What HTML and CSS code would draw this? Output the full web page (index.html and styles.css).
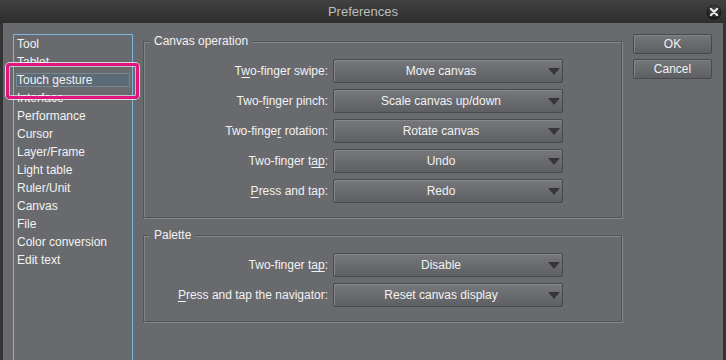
FILE: index.html
```html
<!DOCTYPE html>
<html lang="en">
<head>
  <meta charset="UTF-8" />
  <title>Preferences</title>
  <link rel="stylesheet" href="styles.css">
</head>
<body>
  <div class="window">
    <div class="titlebar">
      <span></span>
      <span class="title">Preferences</span>
      <span class="close">
        <svg width="16" height="16" viewBox="0 0 16 16">
          <defs>
            <radialGradient id="knob" cx="50%" cy="35%" r="60%">
              <stop offset="0" stop-color="#4a4a4a"/>
              <stop offset="1" stop-color="#161616"/>
            </radialGradient>
          </defs>
          <circle cx="8" cy="8" r="7.5" fill="url(#knob)"/>
          <path d="M4.8 4.8 L11.2 11.2 M11.2 4.8 L4.8 11.2" stroke="#e6e6e6" stroke-width="2.2" stroke-linecap="round"/>
        </svg>
      </span>
    </div>

    <div class="body">
      <ul class="cats">
        <li class="cat">Tool</li>
        <li class="cat">Tablet</li>
        <li class="cat active">Touch gesture</li>
        <li class="cat">Interface</li>
        <li class="cat">Performance</li>
        <li class="cat">Cursor</li>
        <li class="cat">Layer/Frame</li>
        <li class="cat">Light table</li>
        <li class="cat">Ruler/Unit</li>
        <li class="cat">Canvas</li>
        <li class="cat">File</li>
        <li class="cat">Color conversion</li>
        <li class="cat">Edit text</li>
      </ul>

      <div class="panel">
        <fieldset class="group">
          <legend>Canvas operation</legend>
          <div class="rows">
            <label class="lbl"><span>T<u>w</u>o-finger swipe:</span></label>
            <div class="combo"><span>Move canvas</span><i class="arrow"></i></div>
            <label class="lbl"><span>Two-f<u>i</u>nger pinch:</span></label>
            <div class="combo"><span>Scale canvas up/down</span><i class="arrow"></i></div>
            <label class="lbl"><span>Two-finge<u>r</u> rotation:</span></label>
            <div class="combo"><span>Rotate canvas</span><i class="arrow"></i></div>
            <label class="lbl"><span>Two-finger t<u>ap</u>:</span></label>
            <div class="combo"><span>Undo</span><i class="arrow"></i></div>
            <label class="lbl"><span><u>P</u>ress and tap:</span></label>
            <div class="combo"><span>Redo</span><i class="arrow"></i></div>
          </div>
        </fieldset>

        <fieldset class="group">
          <legend>Palette</legend>
          <div class="rows">
            <label class="lbl"><span>Two-finger t<u>ap</u>:</span></label>
            <div class="combo"><span>Disable</span><i class="arrow"></i></div>
            <label class="lbl"><span><u>P</u>ress and tap the navigator:</span></label>
            <div class="combo"><span>Reset canvas display</span><i class="arrow"></i></div>
          </div>
        </fieldset>
      </div>

      <div class="actions">
        <button class="btn">OK</button>
        <button class="btn">Cancel</button>
      </div>

      <!-- repère d'annotation sur l'élément sélectionné -->
      <div class="callout"></div>
    </div>
  </div>
</body>
</html>
```

FILE: styles.css
```css
* {
  box-sizing: border-box;
}
body {
  margin: 0;
  background: #333;
  font-family: 'Liberation Sans', Arial, sans-serif;
  font-size: 12px;
  color: #f2f2f2;
}
.window {
  width: 726px;
  height: 360px;
  background: #343434;
  overflow: hidden;
}

/* Barre de titre */
.titlebar {
  height: 23px;
  display: grid;
  grid-template-columns: 1fr auto 1fr;
  align-items: center;
  background: linear-gradient(#414141, #2e2e2e);
}
.title {
  color: #bdbdbd;
  font-size: 13px;
}
.close {
  justify-self: end;
  margin-right: 4px;
  height: 16px;
}

/* Corps */
.body {
  position: relative;
  height: 337px;
  margin: 0 3px;
  padding: 11px 11px 0 10px;
  display: flex;
  background: #696a6e;
}
.cats {
  list-style: none;
  margin: 0;
  padding: 0;
  width: 120px;
  border: 1px solid #7eb6dc;
  border-bottom: none;
}
.cat {
  height: 18px;
  line-height: 18px;
  padding-left: 3px;
  white-space: nowrap;
}
.cat.active {
  height: 14px;
  line-height: 12px;
  margin: 2px;
  padding-left: 0;
  border: 1px solid #7a8893;
  background: #5d6b76;
}

.panel {
  width: 480px;
  margin-left: 10px;
}
.group {
  margin: 0 1px 10px 0;
  padding: 11px 0 14px 0;
  border: 1px solid #535458;
  box-shadow: inset 1px 1px 0 #86878b, 1px 1px 0 #86878b;
}
.group legend {
  margin-left: 6px;
  padding: 0 4px;
  line-height: 14px;
  background: #696a6e;
}
.rows {
  display: grid;
  grid-template-columns: 1fr 230px;
  column-gap: 5px;
  row-gap: 6px;
  padding-right: 58px;
}
.lbl {
  height: 24px;
  display: flex;
  align-items: center;
  justify-content: flex-end;
  white-space: nowrap;
}
.lbl u {
  text-underline-offset: 2px;
}
.combo {
  height: 24px;
  display: flex;
  align-items: center;
  border: 1px solid #48494c;
  border-radius: 2px;
  background: linear-gradient(#77787b, #5e5f62);
  box-shadow: inset 1px 1px 0 #86878a;
}
.combo span {
  flex: 1;
  text-align: center;
  padding-left: 2px;
}
.arrow {
  width: 0;
  height: 0;
  margin: 1px 2px 0 2px;
  border-left: 6px solid transparent;
  border-right: 6px solid transparent;
  border-top: 7px solid #363636;
}

.actions {
  margin-left: 10px;
  width: 79px;
  display: flex;
  flex-direction: column;
  gap: 5px;
}
.btn {
  height: 20px;
  padding: 0;
  font: inherit;
  color: #f2f2f2;
  border: 1px solid #48494c;
  border-radius: 2px;
  background: linear-gradient(#75767a, #5e5f63);
  box-shadow: inset 1px 1px 0 #838488;
}

.callout {
  position: absolute;
  left: 3px;
  top: 40px;
  width: 133px;
  height: 36px;
  border: 3px solid #e3137f;
  border-radius: 4px;
  box-shadow: 0 0 0 1px rgba(255, 255, 255, 0.75), inset 0 0 0 1px rgba(255, 255, 255, 0.6);
}
```
